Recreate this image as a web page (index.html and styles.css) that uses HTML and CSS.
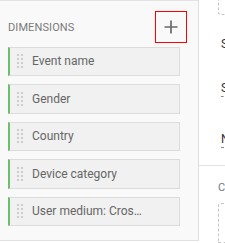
FILE: index.html
```html
<!DOCTYPE html>
<html>
<head>
<meta charset="utf-8">
<link rel="stylesheet" href="styles.css">
</head>
<body>
<div class="page">
  <div class="dims">
    <div class="dims-head">
      <span class="dims-title">DIMENSIONS</span>
      <button class="add-btn" aria-label="Add dimension">
        <svg width="14" height="14" viewBox="0 0 14 14"><path d="M7 0.5v13M0.5 7h13" stroke="#6a6a6a" stroke-width="1.7" fill="none"/></svg>
      </button>
    </div>
    <div class="dim-list">
      <div class="dim-item"><span class="handle"></span><span class="dim-name">Event name</span></div>
      <div class="dim-item"><span class="handle"></span><span class="dim-name">Gender</span></div>
      <div class="dim-item"><span class="handle"></span><span class="dim-name">Country</span></div>
      <div class="dim-item"><span class="handle"></span><span class="dim-name">Device category</span></div>
      <div class="dim-item"><span class="handle"></span><span class="dim-name">User medium: Cros…</span></div>
    </div>
  </div>
  <div class="side">
    <div class="side-top">
      <div class="drop-top"></div>
      <div class="side-line l1">S</div>
      <div class="side-line l2"><span class="dash">S</span></div>
      <div class="side-line l3"><span class="dash">N</span></div>
    </div>
    <div class="side-bottom">
      <div class="side-head">C</div>
      <div class="drop-bottom"></div>
    </div>
  </div>
</div>
</body>
</html>
```
FILE: styles.css
```css
* { box-sizing: border-box; }
html, body { margin: 0; padding: 0; background: #fff; }
body { font-family: Roboto, "Noto Sans", Arial, sans-serif; }
.page { display: flex; width: 225px; height: 243px; overflow: hidden; }

.dims {
  width: 199px;
  height: 241px;
  flex: none;
  background: #f9f9f9;
  border-top: 1px solid #e3e3e3;
  border-right: 1px solid #e0e0e0;
  border-bottom: 1px solid #e0e0e0;
  padding: 10px 11px 0 8px;
}
.dims-head { display: flex; align-items: center; justify-content: space-between; height: 32px; }
.dims-title { font-size: 11px; color: #7a7a7a; letter-spacing: 0.1px; }
.add-btn {
  width: 32px; height: 32px; padding: 0; margin: 0;
  border: 1px solid #f00; background: transparent;
  display: flex; align-items: center; justify-content: center;
}
.dim-list { display: flex; flex-direction: column; gap: 8px; margin-top: 3.5px; width: 172px; }
.dim-item {
  height: 29.5px;
  display: flex; align-items: center;
  background: #f1f1f1;
  border: 1px solid #dcdcdc;
  border-left: 2px solid #6cbf6c;
  padding-left: 7px;
}
.handle {
  width: 6px; height: 14px; flex: none;
  background: conic-gradient(from 270deg at 2px 2px, #cdcdcd 25%, transparent 0) 0 0 / 4px 4px;
}
.dim-name { margin-left: 9px; font-size: 12px; color: #666; white-space: nowrap; }

.side { flex: 1; overflow: hidden; display: flex; flex-direction: column; }
.side-top { height: 177px; border-bottom: 1px solid #e3e3e3; padding-left: 19px; }
.drop-top {
  width: 20px; height: 15px;
  border: 1px dashed #c6c6c6; border-top: none;
  border-radius: 0 0 0 3px;
}
.side-line { font-size: 12px; line-height: 16px; color: #333; padding-left: 3px; white-space: nowrap; }
.l1 { margin-top: 20.5px; }
.l2 { margin-top: 28px; }
.l3 { margin-top: 35px; }
.dash { border-bottom: 1px dashed #8a8a8a; padding-bottom: 1px; }
.side-bottom { padding-left: 19px; }
.side-head { font-size: 11px; line-height: 14px; color: #777; margin-top: 15px; white-space: nowrap; }
.drop-bottom {
  width: 20px; height: 40px; margin-top: 8px;
  border: 1px dashed #c6c6c6; border-radius: 3px 0 0 0;
}
```
